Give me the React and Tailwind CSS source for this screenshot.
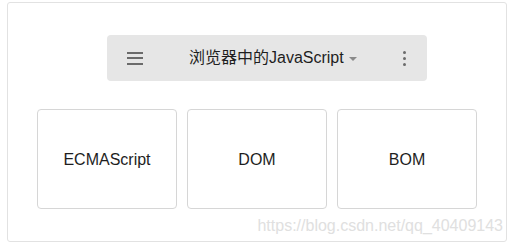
export default function App() {
    const cards = ["ECMAScript", "DOM", "BOM"];

    return (
        <div
            className="w-[512px] h-[243px] bg-white overflow-hidden"
            style={{ fontFamily: '"Liberation Sans", "Noto Sans CJK SC", sans-serif' }}
        >
            <div className="relative ml-[7px] mt-[2px] w-[500px] h-[240px] border border-[#e2e2e2] rounded-[3px] bg-white">
                {/* toolbar */}
                <div className="ml-[99px] mt-[32px] w-[320px] h-[46px] rounded-[4px] bg-[#e6e6e6] flex items-center">
                    <div className="ml-[20px] w-[16px] flex flex-col gap-[3.5px]">
                        <span className="block h-[2px] bg-[#6b6b6b]" />
                        <span className="block h-[2px] bg-[#6b6b6b]" />
                        <span className="block h-[2px] bg-[#6b6b6b]" />
                    </div>
                    <div className="ml-[46px] flex items-center text-[16px] text-[#1e1e1e] leading-none">
                        <span>浏览器中的JavaScript</span>
                        <span className="ml-[5px] mt-[1px] w-0 h-0 border-l-[4px] border-r-[4px] border-t-[4px] border-l-transparent border-r-transparent border-t-[#8a8a8a]" />
                    </div>
                    <div className="ml-auto mr-[21px] flex flex-col gap-[3px]">
                        <span className="block w-[3px] h-[3px] rounded-full bg-[#6b6b6b]" />
                        <span className="block w-[3px] h-[3px] rounded-full bg-[#6b6b6b]" />
                        <span className="block w-[3px] h-[3px] rounded-full bg-[#6b6b6b]" />
                    </div>
                </div>

                {/* cards */}
                <div className="ml-[29px] mt-[28px] flex gap-[10px]">
                    {cards.map((c) => (
                        <div
                            key={c}
                            className="w-[140px] h-[100px] border border-[#d6d6d6] rounded-[4px] flex items-center justify-center pt-[1px] text-[16px] text-[#1e1e1e]"
                        >
                            {c}
                        </div>
                    ))}
                </div>

                {/* watermark */}
                <div className="absolute right-[3px] bottom-[7px] text-[16px] text-[#e0e0e0] leading-none">
                    https://blog.csdn.net/qq_40409143
                </div>
            </div>
        </div>
    );
}
